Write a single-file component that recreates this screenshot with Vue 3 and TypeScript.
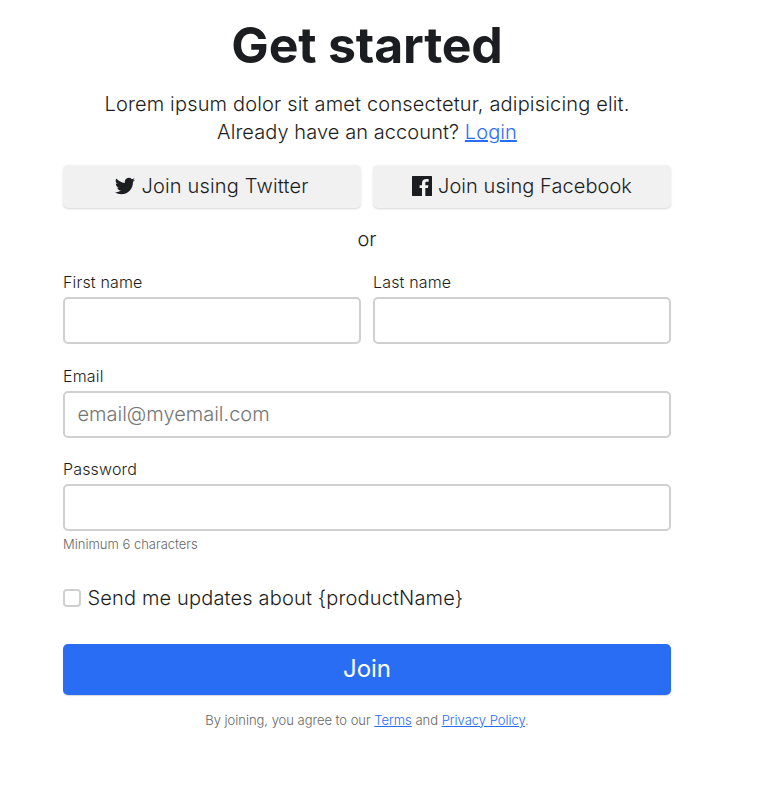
<script setup lang="ts">
import { ref } from 'vue'

const firstName = ref('')
const lastName = ref('')
const email = ref('')
const password = ref('')
const updates = ref(false)
</script>

<template>
  <main class="signup">
    <h1>Get started</h1>
    <p class="lead"><span class="intro">Lorem ipsum dolor sit amet consectetur, adipisicing elit.</span><br />Already have an account? <a href="#">Login</a></p>
    <div class="row social">
      <button type="button" class="provider">
        <svg width="20" height="20" viewBox="0 0 24 24" fill="currentColor"><path d="M24 4.557a9.83 9.83 0 0 1-2.828.775 4.932 4.932 0 0 0 2.165-2.724 9.864 9.864 0 0 1-3.127 1.195 4.916 4.916 0 0 0-8.384 4.482A13.944 13.944 0 0 1 1.671 3.149a4.93 4.93 0 0 0 1.523 6.574 4.903 4.903 0 0 1-2.229-.616c-.054 2.281 1.581 4.415 3.949 4.89a4.935 4.935 0 0 1-2.224.084 4.928 4.928 0 0 0 4.6 3.419A9.9 9.9 0 0 1 0 19.54a13.94 13.94 0 0 0 7.548 2.212c9.142 0 14.307-7.721 13.995-14.646A10.025 10.025 0 0 0 24 4.557z" /></svg>
        <span>Join using Twitter</span>
      </button>
      <button type="button" class="provider facebook">
        <svg width="20" height="20" viewBox="64 64 384 384" fill="currentColor"><path d="M440 64H72a8 8 0 0 0-8 8v368a8 8 0 0 0 8 8h184V296h-45.900v-56H256v-41.400c0-49.600 34.400-76.600 78.700-76.600 21.200 0 44 1.600 49.300 2.300v51.800h-35.300c-24.100 0-28.700 11.400-28.700 28.200V240h57.400l-7.500 56H320v152h120a8 8 0 0 0 8-8V72a8 8 0 0 0-8-8z" /></svg>
        <span>Join using Facebook</span>
      </button>
    </div>
    <p class="or">or</p>
    <form @submit.prevent>
      <div class="row">
        <label class="field"><span>First name</span><input v-model="firstName" type="text" /></label>
        <label class="field"><span>Last name</span><input v-model="lastName" type="text" /></label>
      </div>
      <label class="field email"><span>Email</span><input v-model="email" type="email" placeholder="email@myemail.com" /></label>
      <label class="field"><span>Password</span><input v-model="password" type="password" /></label>
      <p class="hint">Minimum 6 characters</p>
      <label class="check"><input v-model="updates" type="checkbox" /><span>Send me updates about {productName}</span></label>
      <button type="submit" class="join">Join</button>
    </form>
    <p class="legal">By joining, you agree to our <a href="#">Terms</a> and <a href="#">Privacy Policy</a>.</p>
  </main>
</template>

<style>
body { background: #fff; }
</style>

<style scoped>
.signup { width: 608px; margin-left: 63px; padding-top: 16px; font-family: Inter, sans-serif; font-size: 20px; font-weight: 300; line-height: 28px; color: #1c1d21; }
h1, p { margin: 0; text-align: center; }
h1 { font-size: 50px; line-height: 58px; font-weight: 700; letter-spacing: -0.2px; }
a { color: #2a6df5; text-decoration: underline; }
.lead { margin-top: 16px; letter-spacing: 0.08px; }
.intro { letter-spacing: 0.17px; }
.row { display: grid; grid-template-columns: 1fr 1fr; gap: 12px; }
.social { margin-top: 19px; }
button { border: 0; padding: 0; font: inherit; color: inherit; }
.provider { display: flex; align-items: center; justify-content: center; gap: 6px; height: 43px; padding-bottom: 2px; border-radius: 5px; background: #f1f1f1; box-shadow: 0 1px 2px rgba(0, 0, 0, 0.16); letter-spacing: 0.18px; }
.facebook { letter-spacing: 0.06px; }
.or { margin-top: 17px; }
form { margin-top: 19px; }
.field { display: block; margin-bottom: 22px; }
.email { margin-bottom: 21px; }
.field span { display: block; font-size: 16px; line-height: 21px; margin-bottom: 4px; letter-spacing: 0.16px; }
.field input { display: block; box-sizing: border-box; width: 100%; height: 47px; padding: 0 13px 2px 12.5px; border: 2px solid #d0d0d0; border-radius: 5px; background: #fff; font: inherit; color: inherit; outline: 0; }
.field input::placeholder { color: #757575; }
.hint { margin-top: -19px; font-size: 13px; line-height: 20px; text-align: left; color: #666; }
.check { display: flex; align-items: center; gap: 6.5px; margin-top: 30px; letter-spacing: 0.16px; }
.check input { appearance: none; box-sizing: border-box; width: 18px; height: 18px; margin: 0; border: 2px solid #d0d0d0; border-radius: 4px; }
.join { display: block; width: 100%; height: 51px; padding-bottom: 1px; margin-top: 32px; border-radius: 5px; background: #2a6df5; box-shadow: 0 1px 1px rgba(0, 0, 0, 0.16); color: #fff; font-size: 24px; font-weight: 400; }
.legal { margin-top: 15px; font-size: 13px; line-height: 20px; letter-spacing: -0.02px; color: #666; }
</style>
